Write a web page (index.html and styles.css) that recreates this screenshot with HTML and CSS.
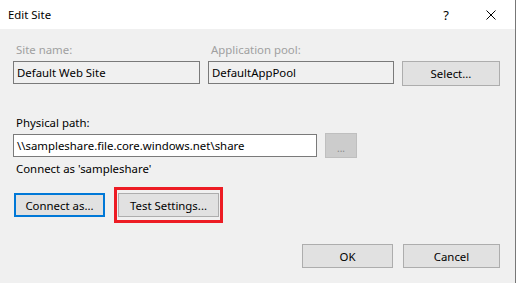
FILE: index.html
```html
<!DOCTYPE html>
<html lang="en">
<head>
    <meta charset="UTF-8">
    <meta name="viewport" content="width=device-width, initial-scale=1.0">
    <title>Edit Site</title>
    <link rel="stylesheet" href="styles.css">
</head>
<body>
    <div class="dialog">
        <div class="titlebar">
            <span class="title">Edit Site</span>
            <div class="title-controls">
                <span class="help">?</span>
                <svg class="close-icon" viewBox="0 0 10 10" xmlns="http://www.w3.org/2000/svg">
                    <path d="M0.5 0.5L9.5 9.5M9.5 0.5L0.5 9.5" stroke="currentColor" stroke-width="1" fill="none"/>
                </svg>
            </div>
        </div>

        <div class="content">
            <div class="site-grid">
                <span class="field-label text-disabled">Site name:</span>
                <span class="field-label text-disabled">Application pool:</span>
                <span></span>
                <div class="textbox textbox-readonly">Default Web Site</div>
                <div class="textbox textbox-readonly">DefaultAppPool</div>
                <button class="button">Select...</button>
            </div>

            <div class="path-section">
                <span class="field-label">Physical path:</span>
                <div class="path-row">
                    <div class="textbox path-box">\\sampleshare.file.core.windows.net\share</div>
                    <button class="button button-browse" disabled>...</button>
                </div>
                <p class="connect-note">Connect as 'sampleshare'</p>
            </div>

            <div class="action-row">
                <button class="button button-focused">Connect as...</button>
                <div class="highlight">
                    <button class="button button-test">Test Settings...</button>
                </div>
            </div>

            <div class="footer">
                <button class="button button-ok">OK</button>
                <button class="button button-cancel">Cancel</button>
            </div>
        </div>
    </div>
</body>
</html>
```

FILE: styles.css
```css
:root {
    --window: #f0f0f0;
    --titlebar: #ffffff;
    --text: #000000;
    --disabled: #a0a0a0;
    --field-border: #7a7a7a;
    --button-bg: #e1e1e1;
    --button-border: #adadad;
    --focus: #0078d7;
    --highlight: #ed1c24;
    --frame: #777777;
}

* {
    box-sizing: border-box;
}

body {
    font-family: "Noto Sans", "Open Sans", sans-serif;
    font-size: 11.4px;
    margin: 0;
    padding: 0;
    background-color: #ffffff;
    color: var(--text);
}

.dialog {
    width: 516px;
    height: 283px;
    background-color: var(--window);
    border-right: 1px solid var(--frame);
}

/* Title bar */
.titlebar {
    display: flex;
    align-items: center;
    justify-content: space-between;
    height: 29px;
    padding-left: 8px;
    background-color: var(--titlebar);
}

.title {
    font-size: 11.4px;
}

.title-controls {
    display: flex;
    align-items: center;
    gap: 37px;
    padding-right: 19px;
}

.help {
    font-size: 13px;
}

.close-icon {
    width: 10px;
    height: 10px;
    color: #000000;
}

/* Content */
.content {
    padding: 13px 15px 0 13px;
}

.site-grid {
    display: grid;
    grid-template-columns: 187px 186px 98px;
    column-gap: 8px;
    row-gap: 3px;
    align-items: start;
}

.field-label {
    display: block;
    line-height: 16px;
    padding-left: 3px;
}

.text-disabled {
    color: var(--disabled);
}

.textbox {
    height: 23px;
    line-height: 21px;
    padding-left: 3px;
    border: 1px solid var(--field-border);
    white-space: nowrap;
    overflow: hidden;
}

.textbox-readonly {
    background-color: var(--window);
}

.path-section {
    margin-top: 29px;
}

.path-row {
    display: flex;
    align-items: center;
    gap: 8px;
    margin-top: 2px;
}

.path-box {
    width: 304px;
    background-color: #ffffff;
}

.connect-note {
    margin: 3px 0 0;
    line-height: 16px;
    padding-left: 3px;
}

/* Buttons */
.button {
    display: inline-flex;
    align-items: center;
    justify-content: center;
    height: 24px;
    padding: 0;
    font-family: inherit;
    font-size: 11.4px;
    color: var(--text);
    background-color: var(--button-bg);
    border: 1px solid var(--button-border);
}

.site-grid .button {
    height: 25px;
}

.button-browse {
    width: 32px;
    height: 25px;
    background-color: #cccccc;
    border-color: #bfbfbf;
    color: #8a8a8a;
    font-size: 10px;
    padding-top: 4px;
}

.button-focused {
    width: 91px;
    border: 2px solid var(--focus);
}

.action-row {
    display: flex;
    align-items: center;
    gap: 9px;
    margin-top: 10px;
    padding-left: 1px;
}

.highlight {
    display: flex;
    padding: 3px 1px;
    border: 3px solid var(--highlight);
}

.button-test {
    width: 101px;
}

.footer {
    display: flex;
    justify-content: flex-end;
    gap: 10px;
    margin-top: 21px;
}

.button-ok {
    width: 91px;
}

.button-cancel {
    width: 97px;
}
```
